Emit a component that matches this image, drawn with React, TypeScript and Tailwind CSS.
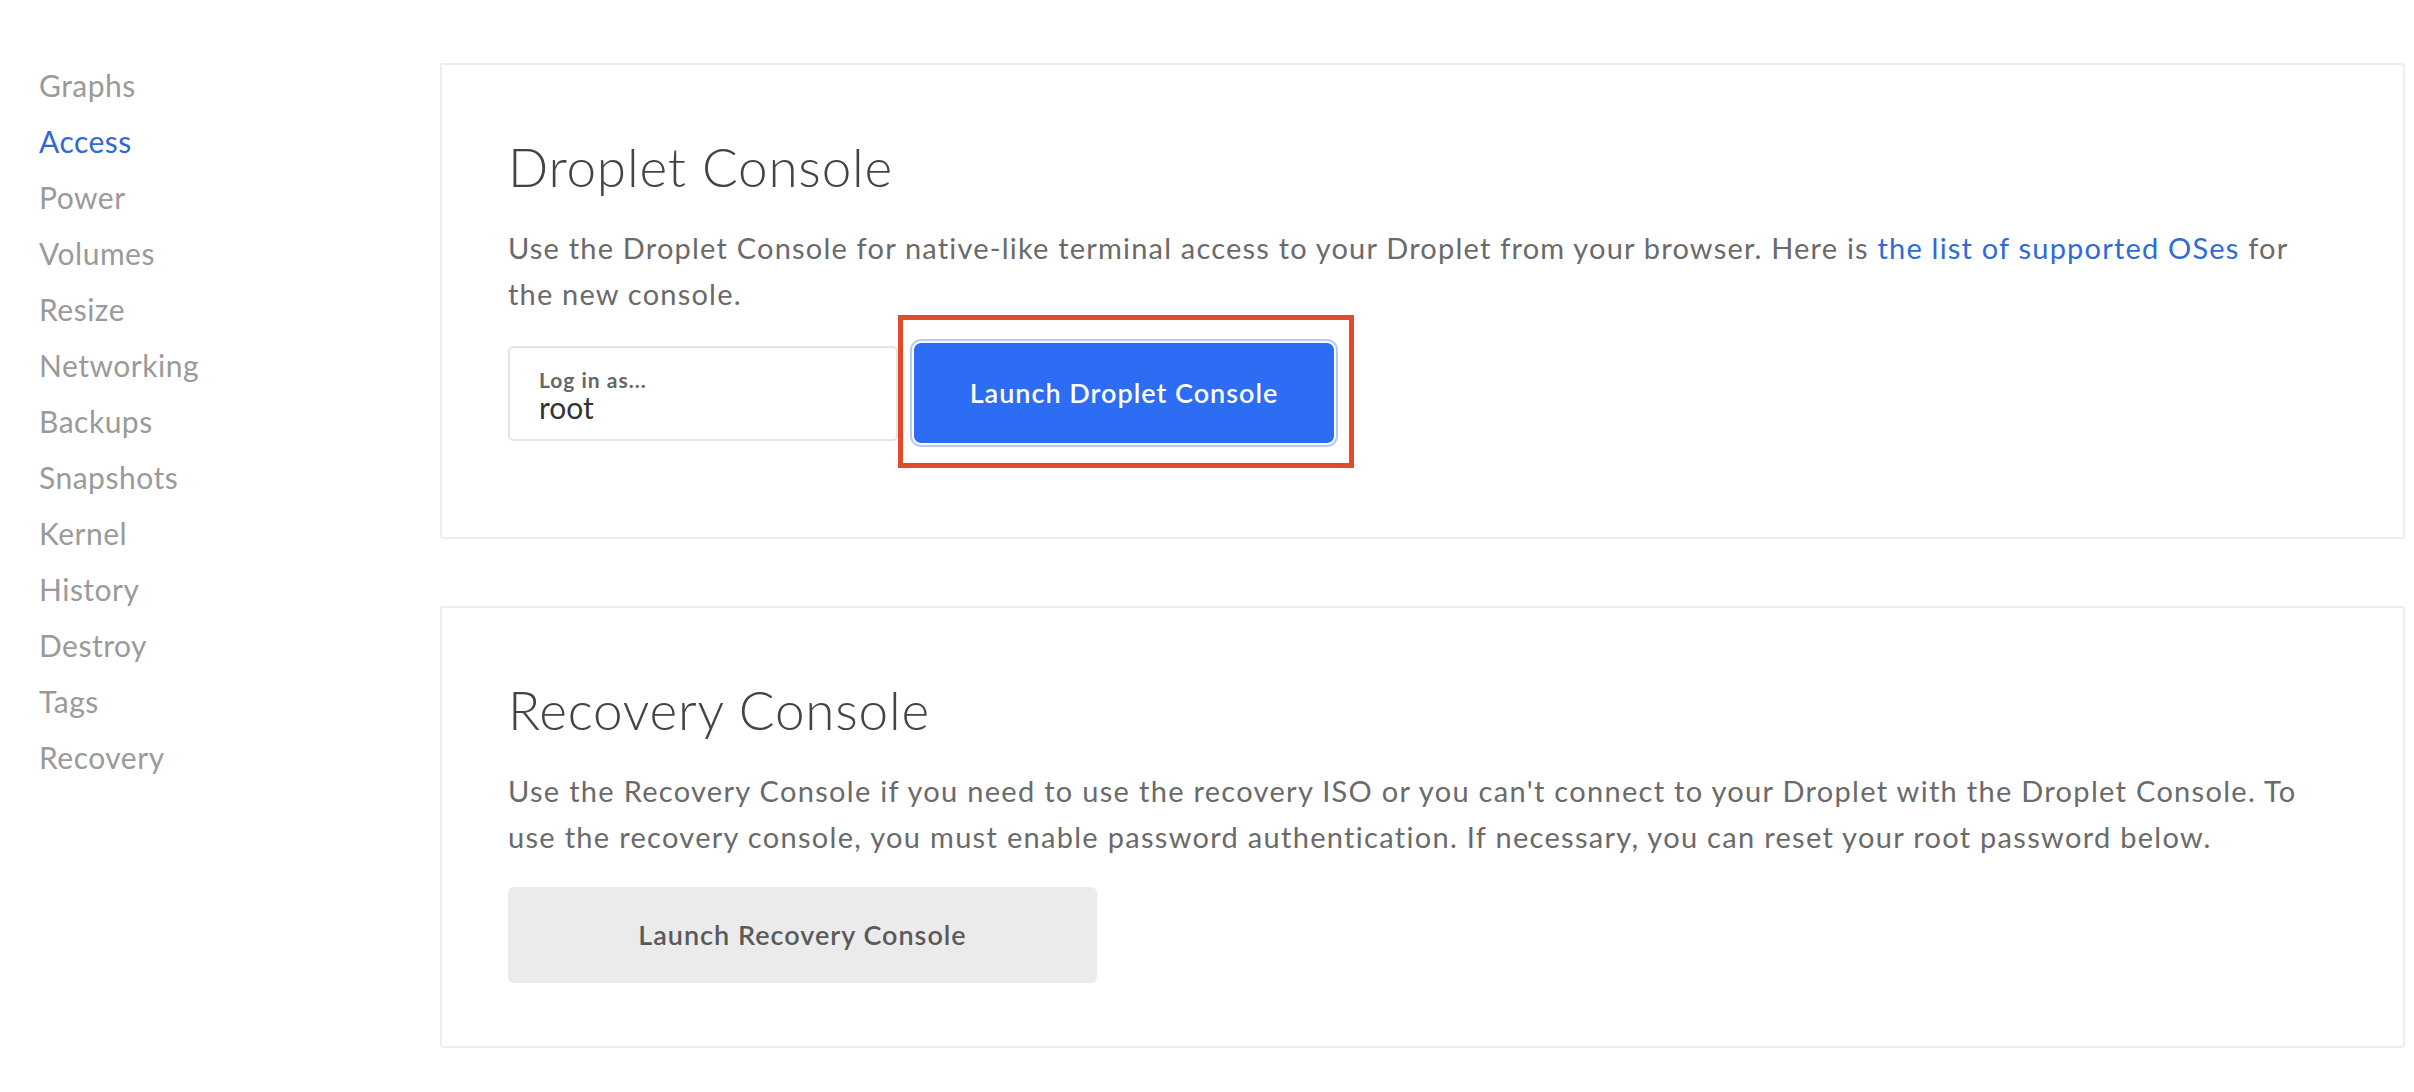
const navItems = [
  "Graphs",
  "Access",
  "Power",
  "Volumes",
  "Resize",
  "Networking",
  "Backups",
  "Snapshots",
  "Kernel",
  "History",
  "Destroy",
  "Tags",
  "Recovery",
];

const font = { fontFamily: "Lato, 'Open Sans', sans-serif" };

// Droplet access page
const App = () => {
  return (
    <div className="min-h-screen bg-white flex" style={font}>
      {/* Left side - droplet menu */}
      <nav className="w-[440px] shrink-0 pl-[39px] pt-[57px]">
        {navItems.map((item) => (
          <div
            key={item}
            className={`h-[56px] leading-[56px] text-[30px] tracking-[0.5px] ${
              item === "Access" ? "text-[#3169d3]" : "text-[#9a9a9a]"
            }`}
          >
            {item}
          </div>
        ))}
      </nav>

      {/* Right side - consoles */}
      <main className="flex-1 pr-[9px] pt-[63px] flex flex-col gap-[67px]">
        <section className="border-2 border-[#eeeeee] rounded-[3px] px-[66px] pt-[71px] pb-[94px]">
          <h2 className="text-[53px] leading-[62px] font-light tracking-[0.8px] text-[#444444]">
            Droplet Console
          </h2>
          <p className="mt-[27px] text-[29px] leading-[46px] tracking-[1.2px] text-[#6a6a6a]">
            Use the Droplet Console for native-like terminal access to your
            Droplet from your browser. Here is{" "}
            <a className="text-[#2f6bd5]">the list of supported OSes</a> for
            <br />
            the new console.
          </p>
          <div className="mt-[26px] flex items-center gap-[16px]">
            <div className="w-[390px] h-[95px] border-2 border-[#e4e4e4] rounded-[5px] pl-[29px] pt-[19px]">
              <div className="text-[21px] leading-[25px] font-bold tracking-[1px] text-[#666666]">
                Log in as...
              </div>
              <div className="text-[30px] leading-[30px] text-[#333333]">
                root
              </div>
            </div>
            <div className="relative">
              <button className="w-[420px] h-[100px] rounded-[7px] bg-[#2c6df3] text-white text-[27px] font-semibold tracking-[1px] shadow-[0_0_0_2px_#ffffff,0_0_0_4px_#b4cbfa]">
                Launch Droplet Console
              </button>
              {/* highlight annotation */}
              <div className="absolute -left-[16px] -right-[20px] -top-[28px] -bottom-[25px] border-[5px] border-[#e3492c] pointer-events-none" />
            </div>
          </div>
        </section>

        <section className="border-2 border-[#eeeeee] rounded-[3px] px-[66px] pt-[71px] pb-[63px]">
          <h2 className="text-[53px] leading-[62px] font-light tracking-[0.8px] text-[#444444]">
            Recovery Console
          </h2>
          <p className="mt-[27px] text-[29px] leading-[46px] tracking-[1.3px] text-[#6a6a6a]">
            Use the Recovery Console if you need to use the recovery ISO or you
            can't connect to your Droplet with the Droplet Console. To
            <br />
            use the recovery console, you must enable password authentication.
            If necessary, you can reset your root password below.
          </p>
          <button className="mt-[27px] w-[589px] h-[96px] rounded-[6px] bg-[#ebebeb] text-[#5a5a5a] text-[27px] font-semibold tracking-[1px]">
            Launch Recovery Console
          </button>
        </section>
      </main>
    </div>
  );
};
export default App;
